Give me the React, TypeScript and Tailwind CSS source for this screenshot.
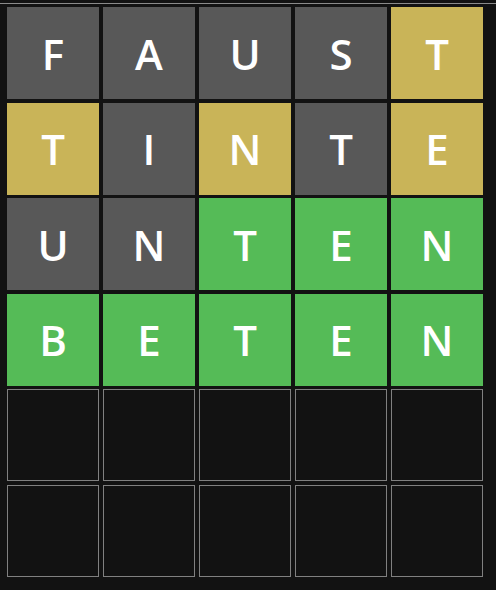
import React from 'react';

type Mark = 'absent' | 'present' | 'correct';

interface Guess {
  word: string;
  marks: Mark[];
}

const guesses: Guess[] = [
  { word: 'FAUST', marks: ['absent', 'absent', 'absent', 'absent', 'present'] },
  { word: 'TINTE', marks: ['present', 'absent', 'present', 'absent', 'present'] },
  { word: 'UNTEN', marks: ['absent', 'absent', 'correct', 'correct', 'correct'] },
  { word: 'BETEN', marks: ['correct', 'correct', 'correct', 'correct', 'correct'] },
];

const ROWS = 6;
const COLS = 5;

const markStyles: Record<Mark, string> = {
  absent: 'bg-[#585858]',
  present: 'bg-[#c9b458]',
  correct: 'bg-[#55bb57]',
};

function Tile({ letter, mark }: { letter?: string; mark?: Mark }) {
  if (!letter || !mark) {
    return <div className="h-[92px] w-[92px] border border-[#808080] bg-[#121212]" />;
  }

  return (
    <div
      className={`flex h-[92px] w-[92px] items-center justify-center text-[42px] font-semibold text-white ${markStyles[mark]}`}
    >
      {letter}
    </div>
  );
}

export default function App() {
  return (
    <div
      className="h-[590px] w-[496px] overflow-hidden bg-[#121212]"
      style={{ fontFamily: '"Open Sans", Inter, sans-serif' }}
    >
      {/* header divider */}
      <div className="h-[3px]" />
      <div className="h-px bg-[#8a8a8a]" />

      {/* board */}
      <div className="grid grid-cols-[repeat(5,92px)] gap-x-[4px] gap-y-[3.6px] pl-[7px] pt-[3px]">
        {Array.from({ length: ROWS }).map((_, r) =>
          Array.from({ length: COLS }).map((_, c) => {
            const guess = guesses[r];
            return (
              <Tile
                key={`${r}-${c}`}
                letter={guess?.word[c]}
                mark={guess?.marks[c]}
              />
            );
          })
        )}
      </div>
    </div>
  );
}
